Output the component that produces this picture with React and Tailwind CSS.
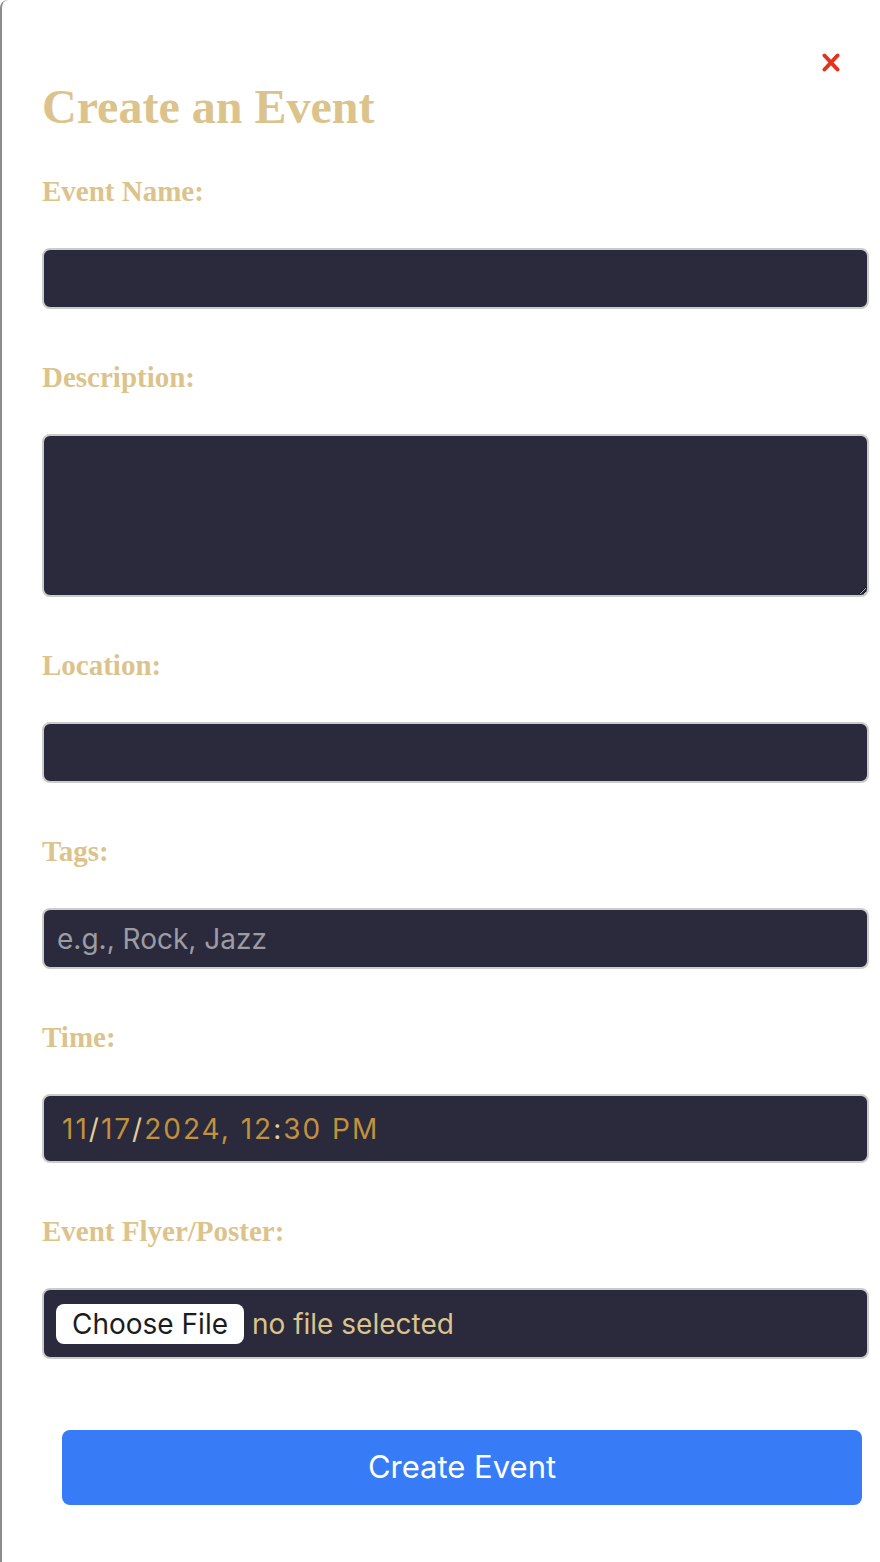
const serif = "font-['Liberation_Serif','Times_New_Roman',serif]"
const sans = "font-['Inter','Helvetica_Neue',Arial,sans-serif]"

const FIELDS = [
  { label: 'Event Name:', kind: 'input' },
  { label: 'Description:', kind: 'textarea' },
  { label: 'Location:', kind: 'input' },
  { label: 'Tags:', kind: 'input', placeholder: 'e.g., Rock, Jazz' },
  { label: 'Time:', kind: 'time' },
  { label: 'Event Flyer/Poster:', kind: 'file' },
]

const box = 'block w-[827px] rounded-lg border-2 border-[#cbcbcb] bg-[#2a2a3c] outline-none'

function Field({ f, first }) {
  return (
    <div className={first ? 'mt-[40px]' : 'mt-[52px]'}>
      <label className={`${serif} block text-[29px] leading-[32px] font-bold text-[#dcc38c]`}>{f.label}</label>
      <div className="mt-[41px]">
        {f.kind === 'input' && (
          <input type="text" placeholder={f.placeholder}
            className={`${box} ${sans} h-[61px] px-[13px] text-[28px] text-[#dcc38c] placeholder:text-[#9c9ca4]`} />
        )}
        {f.kind === 'textarea' && (
          <textarea className={`${box} h-[163px] resize-y`} />
        )}
        {f.kind === 'time' && (
          <div className={`${box} ${sans} h-[69px] flex items-center pl-[18px] text-[28px] tracking-[2px] text-[#c0913f]`}>
            11<span className="text-[#e3cd98]">/</span>17<span className="text-[#e3cd98]">/</span>2024, 12<span className="text-[#e3cd98]">:</span>30 PM
          </div>
        )}
        {f.kind === 'file' && (
          <div className={`${box} ${sans} h-[71px] flex items-center pl-[12px] gap-[8px] text-[28px]`}>
            <span className="h-[40px] px-[16px] flex items-center rounded-lg bg-white text-[#1c1c1c]">Choose File</span>
            <span className="text-[#dcc38c]">no file selected</span>
          </div>
        )}
      </div>
    </div>
  )
}

export default function App() {
  return (
    <div className="min-h-[1562px] bg-white">
      <div className="min-h-[1562px] border-l-2 border-[#8c8c8c] rounded-tl-lg pl-[40px] pb-[57px]">
        <div className="flex justify-end pt-[53px] pr-[40px]">
          <button className="w-[18px] h-[19px]">
            <svg viewBox="0 0 18 19" width="18" height="19">
              <path d="M2.5 2.5 L15.5 16.5 M15.5 2.5 L2.5 16.5" stroke="#e5321e" strokeWidth="4" strokeLinecap="round" />
            </svg>
          </button>
        </div>
        <h2 className={`${serif} mt-[7px] text-[48px] leading-[56px] font-bold text-[#dcc38c]`}>Create an Event</h2>
        <form>
          {FIELDS.map((f, i) => <Field key={f.label} f={f} first={i === 0} />)}
          <button type="button"
            className={`${sans} mt-[71px] ml-[20px] w-[800px] h-[75px] rounded-lg bg-[#377bf6] text-white text-[31px]`}>
            Create Event
          </button>
        </form>
      </div>
    </div>
  )
}
